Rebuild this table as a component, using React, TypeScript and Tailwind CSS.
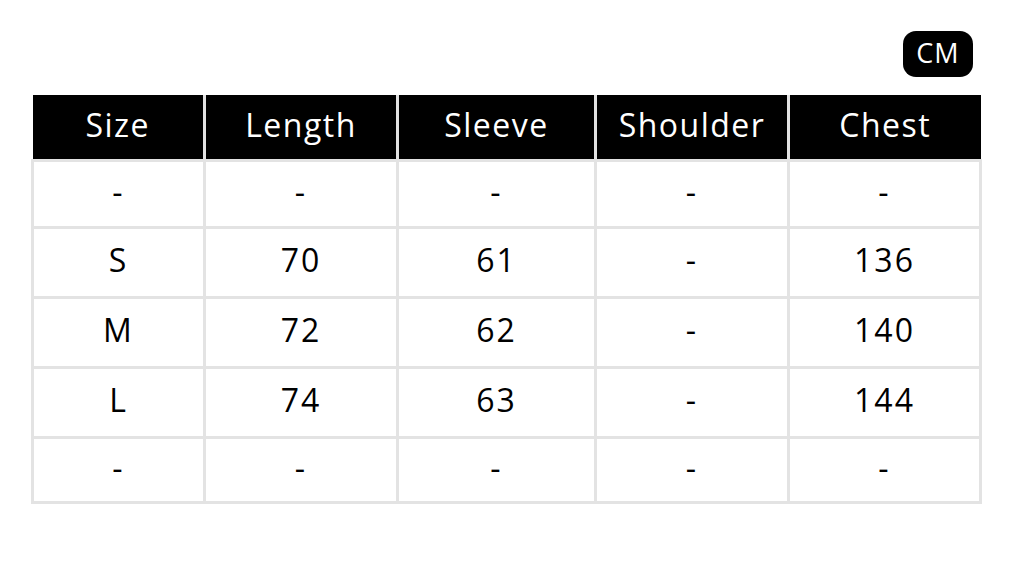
const headers = ["Size", "Length", "Sleeve", "Shoulder", "Chest"];
const rows = [
  ["-", "-", "-", "-", "-"],
  ["S", "70", "61", "-", "136"],
  ["M", "72", "62", "-", "140"],
  ["L", "74", "63", "-", "144"],
  ["-", "-", "-", "-", "-"],
];
const widths = ["w-[172px]", "w-[193px]", "w-[198px]", "w-[193px]", "w-[192px]"];
const heights = ["h-[67px]", "h-[70px]", "h-[70px]", "h-[70px]", "h-[65px]"];

export default function App() {
  return (
    <div
      className="w-[1024px] h-[580px] bg-white"
      style={{ fontFamily: "'Open Sans', 'Noto Sans', sans-serif" }}
    >
      <div className="flex justify-end pt-[31px] pr-[51px]">
        <div className="w-[70px] h-[46px] rounded-[13px] bg-black text-white text-[27px] flex items-center justify-center tracking-[1px] pb-[2px]">
          CM
        </div>
      </div>
      <table className="ml-[31px] mt-[18px] border-collapse table-fixed">
        <thead>
          <tr className="h-[65px] bg-black text-white">
            {headers.map((h, i) => (
              <th
                key={h}
                className={`${widths[i]} p-0 pb-[4px] font-normal text-[32px] tracking-[1.5px] text-center ${
                  i > 0 ? "border-l-[3px] border-[#e3e3e3]" : ""
                }`}
              >
                {h}
              </th>
            ))}
          </tr>
        </thead>
        <tbody>
          {rows.map((r, ri) => (
            <tr key={ri} className={heights[ri]}>
              {r.map((c, ci) => (
                <td
                  key={ci}
                  className="p-0 pb-[4px] border-[3px] border-[#e3e3e3] text-center text-[32px] tracking-[2px] text-black"
                >
                  {c}
                </td>
              ))}
            </tr>
          ))}
        </tbody>
      </table>
    </div>
  );
}
